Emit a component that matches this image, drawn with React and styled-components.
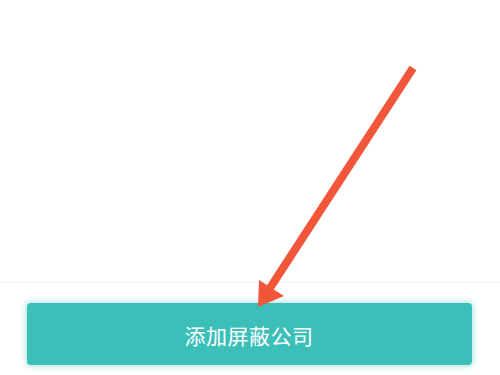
import React from "react";
import styled, { createGlobalStyle } from "styled-components";

const GlobalStyle = createGlobalStyle`
  html, body {
    margin: 0;
    padding: 0;
    background: #ffffff;
  }
  body {
    font-family: "Noto Sans CJK SC", "Noto Sans", sans-serif;
  }
`;

const Page = styled.div`
  position: relative;
  width: 500px;
  height: 375px;
  overflow: hidden;
  background: #ffffff;
  display: flex;
  flex-direction: column;
`;

const Content = styled.div`
  height: 282px;
  border-bottom: 1px solid #f1f3f3;
`;

const Footer = styled.div`
  flex: 1;
  display: flex;
  align-items: flex-start;
  justify-content: center;
  padding-top: 20px;
`;

const AddButton = styled.button`
  width: 445px;
  height: 62px;
  margin-left: -2px;
  border: none;
  border-radius: 4px;
  background: #3bbfb8;
  box-shadow: 0 0 5px 2px rgba(59, 191, 184, 0.35);
  color: #ffffff;
  font-family: "Noto Sans CJK SC", "Noto Sans", sans-serif;
  font-size: 21px;
  letter-spacing: 0.5px;
  padding: 0;
  padding-top: 2px;
  cursor: pointer;
`;

const Arrow = styled.svg`
  position: absolute;
  left: 0;
  top: 0;
  width: 500px;
  height: 375px;
  pointer-events: none;
`;

const App = () => (
  <>
    <GlobalStyle />
    <Page>
      <Content />
      <Footer>
        <AddButton>添加屏蔽公司</AddButton>
      </Footer>
      <Arrow viewBox="0 0 500 375">
        <line
          x1="413"
          y1="68"
          x2="270"
          y2="288"
          stroke="#f2563a"
          strokeWidth="8"
        />
        <polygon points="258,307 259,280 284,296" fill="#f2563a" />
      </Arrow>
    </Page>
  </>
);

export default App;
